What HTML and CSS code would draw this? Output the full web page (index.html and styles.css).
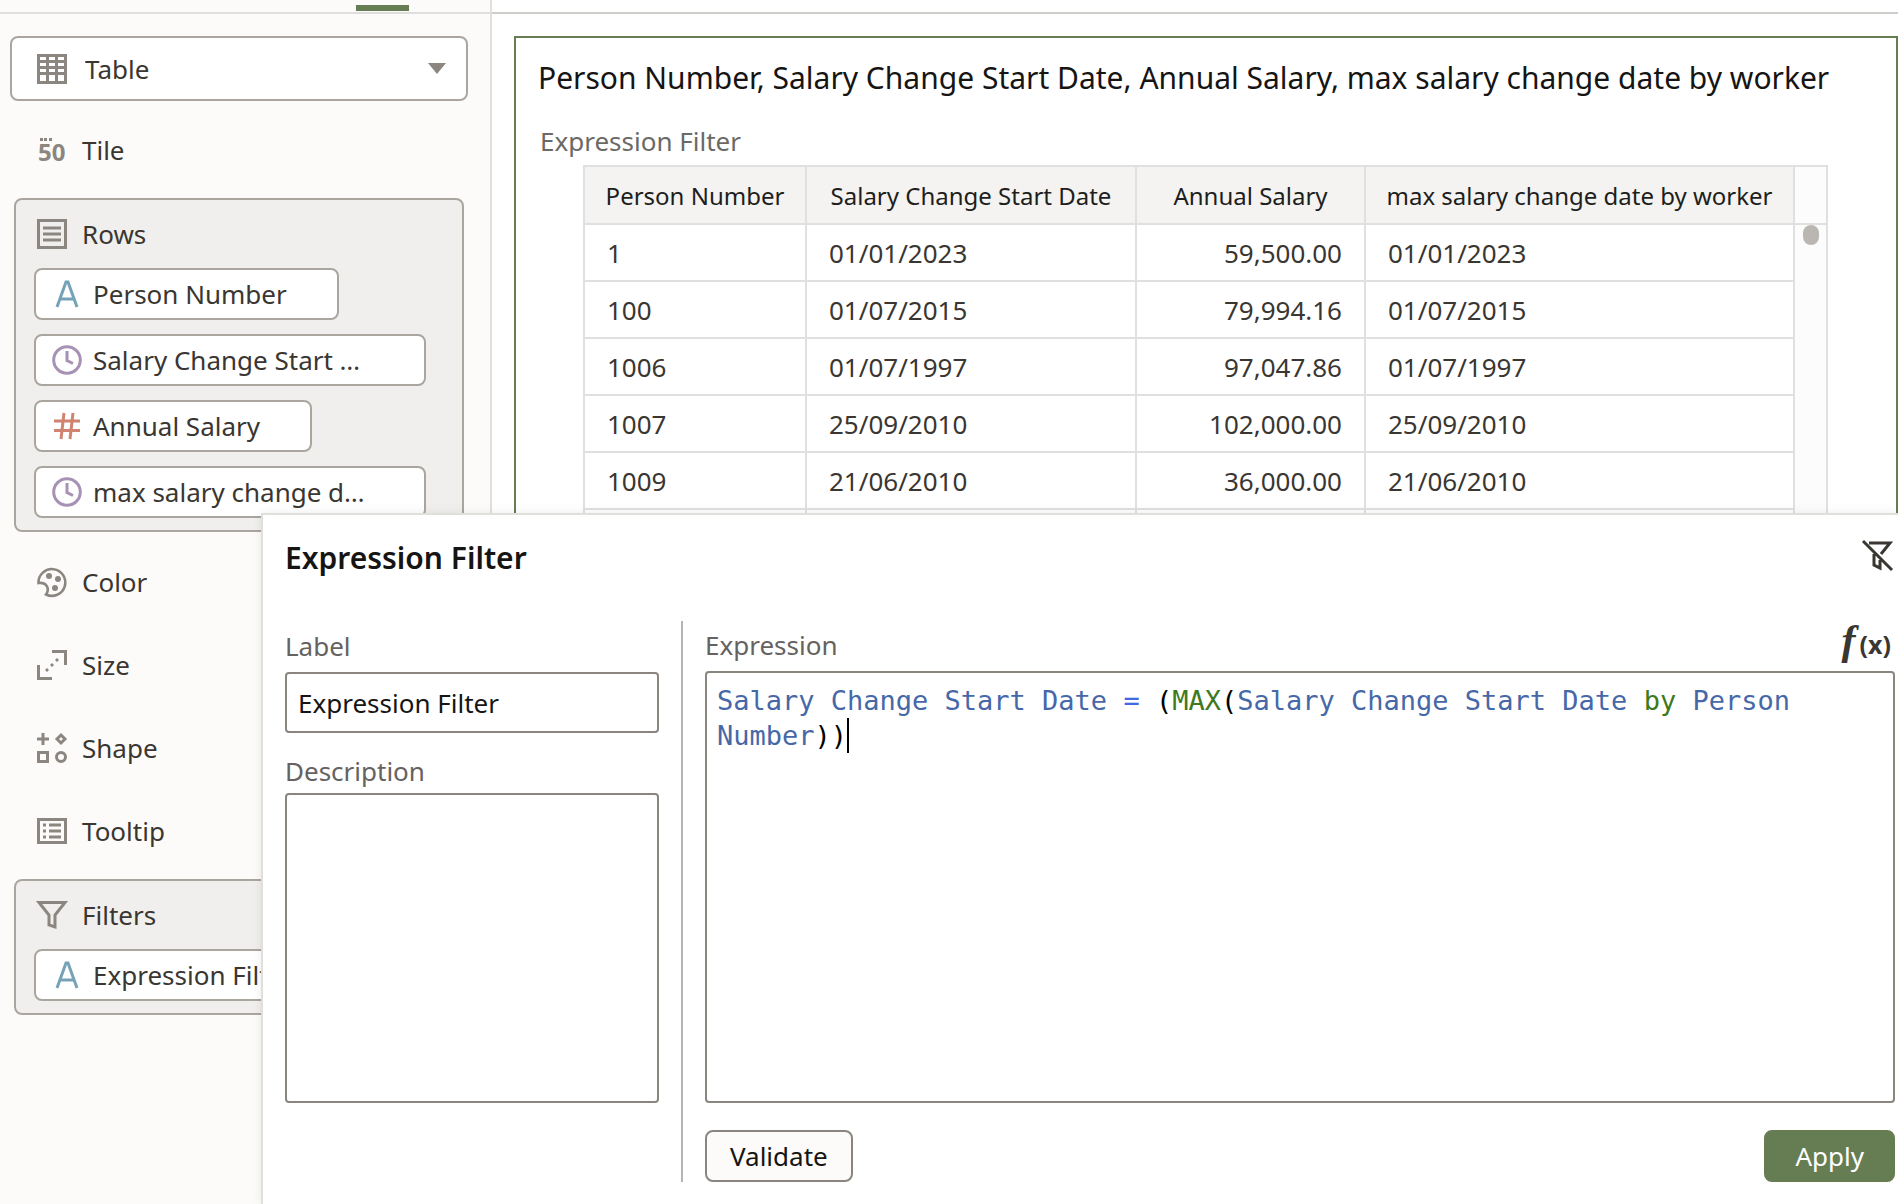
FILE: index.html
```html
<!DOCTYPE html>
<html lang="en">
<head>
    <meta charset="UTF-8">
    <title>Expression Filter</title>
    <link rel="stylesheet" href="styles.css">
</head>
<body>
<div id="container">
    <div id="sidebar">
        <div class="tabs"><span class="selected"></span></div>
        <div class="grammar">
            <label class="viz-type">
                <svg class="icon" viewBox="0 0 30 30"><path fill="#8b8680" fill-rule="evenodd" d="M0 0H30V30H0ZM3 3V6H9V3ZM12 3V6H18V3ZM21 3V6H27V3ZM3 9V12H9V9ZM12 9V12H18V9ZM21 9V12H27V9ZM3 15V18H9V15ZM12 15V18H18V15ZM21 15V18H27V15ZM3 21V27H9V21ZM12 21V27H18V21ZM21 21V27H27V21Z"/></svg>
                <select aria-label="Visualization">
                    <option>Table</option>
                </select>
                <svg class="arrow" viewBox="0 0 18 11"><path fill="#8b8680" d="M0 0H18L9 11Z"/></svg>
            </label>
            <div class="item">
                <svg class="icon" viewBox="0 0 30 30"><path fill="#8b8680" d="M3 3h3v3H3zM7 3h3v3H7zM12 3h3v3h-3z"/><text x="1" y="26" class="fifty">50</text></svg>
                <span>Tile</span>
            </div>
            <div class="panel">
                <div class="panel-head">
                    <svg class="icon" viewBox="0 0 30 30"><path fill="none" stroke="#8b8680" stroke-width="3" d="M1.500 1.500H28.500V28.500H1.500ZM6 9H24M6 15H24M6 21H24"/></svg>
                    <span>Rows</span>
                </div>
                <div class="pill">
                    <svg class="icon" viewBox="0 0 30 30"><path fill="none" stroke="#76a2b8" stroke-width="3" d="M5 28L14 3H16L25 28M8 20H22"/></svg>
                    <span>Person Number</span>
                </div>
                <div class="pill long">
                    <svg class="icon" viewBox="0 0 30 30"><g fill="none" stroke="#a792b5" stroke-width="3"><circle cx="15" cy="15" r="13.300"/><path d="M15 6V15.500L21 18.500"/></g></svg>
                    <span>Salary Change Start …</span>
                </div>
                <div class="pill">
                    <svg class="icon" viewBox="0 0 30 30"><path fill="none" stroke="#d08470" stroke-width="3" d="M12 2L9 28M21 2L18 28M2 10H28M2 19.500H28"/></svg>
                    <span>Annual Salary</span>
                </div>
                <div class="pill long">
                    <svg class="icon" viewBox="0 0 30 30"><g fill="none" stroke="#a792b5" stroke-width="3"><circle cx="15" cy="15" r="13.300"/><path d="M15 6V15.500L21 18.500"/></g></svg>
                    <span>max salary change d…</span>
                </div>
            </div>
            <div class="item">
                <svg class="icon" viewBox="0 0 30 30"><path fill="none" stroke="#8b8680" stroke-width="2.600" d="M1.500 16A13.400 13.400 0 1 1 9 27.500C13 22 10 15 1.500 16Z"/><g fill="#8b8680"><circle cx="12" cy="9" r="3"/><circle cx="21" cy="12" r="3"/><circle cx="18" cy="21" r="3"/></g></svg>
                <span>Color</span>
            </div>
            <div class="item">
                <svg class="icon" viewBox="0 0 30 30"><path fill="none" stroke="#8b8680" stroke-width="3" d="M15 1.500H28.500V15M1.500 15V28.500H15"/><path fill="#8b8680" d="M18 10l2-2 2 2-2 2zM13 15l2-2 2 2-2 2zM8 20l2-2 2 2-2 2z"/></svg>
                <span>Size</span>
            </div>
            <div class="item">
                <svg class="icon" viewBox="0 0 30 30"><g fill="none" stroke="#8b8680" stroke-width="3"><path d="M6 0V12M0 6H12M24 2L28 6L24 10L20 6ZM1.500 19.500H10.500V28.500H1.500Z"/><circle cx="24" cy="24" r="4.500"/></g></svg>
                <span>Shape</span>
            </div>
            <div class="item">
                <svg class="icon" viewBox="0 0 30 30"><path fill="none" stroke="#8b8680" stroke-width="3" d="M1.500 3.500H28.500V26.500H1.500ZM6 9H9M12 9H24M6 15H9M12 15H24M6 21H9M12 21H24"/></svg>
                <span>Tooltip</span>
            </div>
            <div class="panel">
                <div class="panel-head">
                    <svg class="icon" viewBox="0 0 30 30"><path fill="none" stroke="#8b8680" stroke-width="3" d="M2 2.500H28L18 15V27L12 25V15Z"/></svg>
                    <span>Filters</span>
                </div>
                <div class="pill">
                    <svg class="icon" viewBox="0 0 30 30"><path fill="none" stroke="#76a2b8" stroke-width="3" d="M5 28L14 3H16L25 28M8 20H22"/></svg>
                    <span>Expression Filter</span>
                </div>
            </div>
        </div>
    </div>

    <div id="canvas">
        <div class="topline"></div>
        <div class="report">
            <h1>Person Number, Salary Change Start Date, Annual Salary, max salary change date by worker</h1>
            <p>Expression Filter</p>
            <div class="grid">
                <table>
                    <thead>
                    <tr><th class="c1">Person Number</th><th class="c2">Salary Change Start Date</th><th class="c3">Annual Salary</th><th>max salary change date by worker</th></tr>
                    </thead>
                    <tbody>
                    <tr><td>1</td><td>01/01/2023</td><td class="num">59,500.00</td><td>01/01/2023</td></tr>
                    <tr><td>100</td><td>01/07/2015</td><td class="num">79,994.16</td><td>01/07/2015</td></tr>
                    <tr><td>1006</td><td>01/07/1997</td><td class="num">97,047.86</td><td>01/07/1997</td></tr>
                    <tr><td>1007</td><td>25/09/2010</td><td class="num">102,000.00</td><td>25/09/2010</td></tr>
                    <tr><td>1009</td><td>21/06/2010</td><td class="num">36,000.00</td><td>21/06/2010</td></tr>
                    <tr><td></td><td></td><td></td><td></td></tr>
                    </tbody>
                </table>
                <div class="track">
                    <div class="track-head"></div>
                    <div class="thumb"></div>
                </div>
            </div>
        </div>
    </div>

    <div id="dialog" role="dialog" aria-labelledby="dialog-title">
        <div class="dialog-head">
            <h2 id="dialog-title">Expression Filter</h2>
            <button class="icon-btn" aria-label="Disable filter">
                <svg class="icon" viewBox="0 0 30 30"><path fill="none" stroke="#3a3631" stroke-width="3" d="M1 0L30 29M7 2H28L19 13M12 13V24L18 27V19"/></svg>
            </button>
        </div>
        <div class="dialog-body">
            <div class="left">
                <label for="label">Label</label>
                <input type="text" id="label" value="Expression Filter">
                <label for="description">Description</label>
                <textarea id="description"></textarea>
            </div>
            <div class="right">
                <div class="right-head">
                    <span id="expression-label">Expression</span>
                    <button class="icon-btn fx" aria-label="Functions"><i>f</i><b>(x)</b></button>
                </div>
                <div class="editor" role="textbox" contenteditable="true" spellcheck="false" aria-labelledby="expression-label"><span class="col">Salary Change Start Date</span> <span class="op">=</span> (<span class="fn">MAX</span>(<span class="col">Salary Change Start Date</span> <span class="fn">by</span> <span class="col">Person Number</span>))<span class="cursor"></span></div>
                <div class="buttons">
                    <button class="btn">Validate</button>
                    <button class="btn apply">Apply</button>
                </div>
            </div>
        </div>
    </div>
</div>
</body>
</html>
```
FILE: styles.css
```css
*{
    margin: 0;
    padding: 0;
    box-sizing: border-box;
}
body{
    font-family: "Noto Sans", "Open Sans", sans-serif;
    font-size: 26px;
    color: #3a3631;
    background: #fff;
}
button, input, select, textarea{
    font: inherit;
    color: inherit;
}
#container{
    position: relative;
    display: flex;
    height: 100vh;
    overflow: hidden;
}
.icon{
    flex: none;
    width: 30px;
    height: 30px;
    overflow: visible;
}

/* left side */
#sidebar{
    flex: none;
    width: 492px;
    background: #fcfbf9;
    border-right: 2px solid #dfdfdd;
}
.tabs{
    display: flex;
    justify-content: flex-end;
    align-items: flex-end;
    height: 14px;
    padding: 0 81px 1px 0;
    border-bottom: 2px solid #dfdfdd;
}
.tabs .selected{
    width: 53px;
    height: 6px;
    background: #667d54;
}
.grammar{
    padding: 22px 22px 0 10px;
}
.viz-type{
    display: flex;
    align-items: center;
    height: 65px;
    padding: 0 20px 0 25px;
    margin-bottom: 7px;
    background: #fff;
    border: 2px solid #aaa69f;
    border-radius: 8px;
}
.viz-type select{
    flex: 1;
    margin-left: 18px;
    appearance: none;
    border: 0;
    background: none;
}
.arrow{
    width: 18px;
    height: 11px;
}
.item{
    display: flex;
    align-items: center;
    gap: 15px;
    height: 83px;
    padding-left: 27px;
}
.fifty{
    font-size: 24px;
    font-weight: bold;
    fill: #8b8680;
}
.panel{
    margin: 7px 4px 8px;
    padding: 0 18px 12px;
    background: #f0efed;
    border: 2px solid #aaa69f;
    border-radius: 8px;
}
.panel-head{
    display: flex;
    align-items: center;
    gap: 15px;
    height: 68px;
    padding-left: 3px;
}
.pill{
    display: flex;
    align-items: center;
    gap: 11px;
    width: fit-content;
    height: 52px;
    padding: 0 50px 0 16px;
    margin-bottom: 14px;
    background: #fff;
    border: 2px solid #aaa69f;
    border-radius: 8px;
}
.pill.long{
    width: 392px;
}
.pill:last-child{
    margin-bottom: 0;
}

/* report */
#canvas{
    flex: 1;
    min-width: 0;
    padding-top: 12px;
}
.topline{
    height: 2px;
    background: #cfcdca;
}
.report{
    height: 100%;
    margin: 22px 0 0 22px;
    border: 2px solid #667d54;
}
.report h1{
    padding-left: 22px;
    font-size: 30px;
    font-weight: normal;
    line-height: 79px;
    white-space: nowrap;
    color: #161513;
}
.report p{
    padding-left: 24px;
    line-height: 48px;
    color: #6b6966;
}
.grid{
    display: flex;
    margin: 0 68px 0 67px;
}
table{
    flex: 1;
    table-layout: fixed;
    border-collapse: collapse;
}
th, td{
    height: 57px;
    padding: 0 22px;
    border: 2px solid #e0e0e0;
    text-align: left;
    white-space: nowrap;
}
th{
    height: 58px;
    padding: 0;
    background: #f4f3f1;
    color: #201e1c;
    font-size: 24px;
    font-weight: normal;
    text-align: center;
}
.c1{
    width: 222px;
}
.c2{
    width: 330px;
}
.c3{
    width: 229px;
}
td.num{
    text-align: right;
}
.track{
    width: 33px;
    background: #fcfcfc;
    border: 2px solid #e0e0e0;
    border-left: 0;
}
.track-head{
    height: 58px;
    border-bottom: 2px solid #e0e0e0;
}
.thumb{
    width: 16px;
    height: 20px;
    margin: 0 auto;
    border-radius: 8px;
    background: #bab6b2;
}

/* filter popup */
#dialog{
    position: absolute;
    top: 513px;
    left: 261px;
    right: 0;
    bottom: 0;
    display: flex;
    flex-direction: column;
    padding: 0 3px 22px 22px;
    background: #fff;
    border: solid #dfdfdb;
    border-width: 2px 0 0 2px;
    box-shadow: 0 0 10px rgba(0, 0, 0, .08);
}
.dialog-head{
    display: flex;
    justify-content: space-between;
    align-items: center;
    height: 85px;
    padding-right: 3px;
}
h2{
    font-size: 30px;
    font-weight: 600;
    color: #161513;
}
.icon-btn{
    border: 0;
    background: none;
    line-height: 1;
    cursor: pointer;
}
.dialog-body{
    flex: 1;
    display: flex;
    min-height: 0;
    margin-top: 21px;
}
.left{
    display: flex;
    flex-direction: column;
    width: 398px;
    padding-right: 22px;
    border-right: 2px solid #b9b4b0;
}
.left label, .right-head{
    color: #65625f;
}
.left label{
    height: 51px;
    line-height: 50px;
}
.left label + input + label{
    height: 60px;
    line-height: 76px;
}
input, textarea, .editor{
    border: 2px solid #8b8580;
    border-radius: 4px;
    background: #fff;
}
input{
    height: 61px;
    padding: 0 11px;
    color: #161513;
}
textarea{
    flex: 1;
    margin-bottom: 79px;
    resize: none;
}
.right{
    flex: 1;
    display: flex;
    flex-direction: column;
    padding-left: 22px;
}
.right-head{
    display: flex;
    justify-content: space-between;
    height: 50px;
    line-height: 48px;
}
.fx{
    display: flex;
    align-items: baseline;
    gap: 4px;
    padding-right: 4px;
    color: #3a3631;
}
.fx i{
    font: italic bold 42px/38px "Liberation Serif", serif;
}
.fx b{
    font-size: 25px;
}
.editor{
    flex: 1;
    padding: 10px;
    font-family: "DejaVu Sans Mono", monospace;
    font-size: 27px;
    line-height: 35px;
    color: #000;
    outline: none;
}
.col{
    color: #4668a8;
}
.op{
    color: #4169e1;
}
.fn{
    color: #3e7a1c;
}
.cursor{
    border-left: 2px solid #000;
    padding: 2px 0;
}
.buttons{
    display: flex;
    justify-content: space-between;
    margin-top: 27px;
}
.btn{
    height: 52px;
    padding: 0 23px;
    border: 2px solid #8b8580;
    border-radius: 8px;
    background: #fcfbf9;
    color: #161513;
}
.apply{
    padding: 0 29px;
    border-color: #667d54;
    background: #667d54;
    color: #fff;
}
```
